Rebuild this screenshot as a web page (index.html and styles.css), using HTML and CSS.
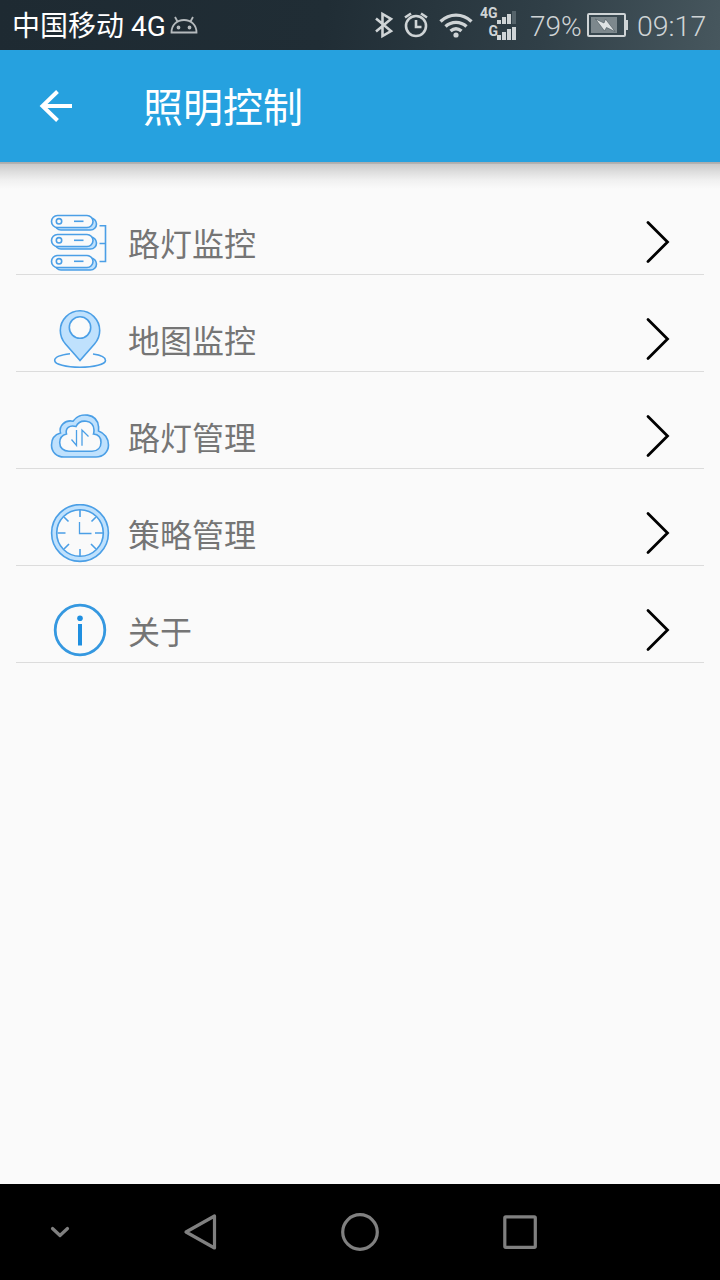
FILE: index.html
```
<!DOCTYPE html>
<html lang="zh-CN">
<head>
    <meta charset="UTF-8">
    <meta name="viewport" content="width=device-width, initial-scale=1.0">
    <title>照明控制</title>
    <link rel="stylesheet" href="styles.css">
</head>
<body>
    <div class="statusbar">
        <span class="carrier">中国移动 4G</span>
        <svg class="android" width="28" height="18" viewBox="0 0 28 18">
            <path d="M1.500 16.500C1.500 9 7 4 14 4s12.500 5 12.500 12.500zM7.500 5.500L5 1M20.500 5.500L23 1" />
            <circle cx="8.500" cy="11.500" r="1" />
            <circle cx="19.500" cy="11.500" r="1" />
        </svg>
        <svg class="signals" width="150" height="50" viewBox="0 0 150 50">
            <path class="line" d="M6 18.500L21 31l-8.500 5V14l8.500 5L6 31.500" />
            <circle class="line" cx="46" cy="26" r="10" />
            <path class="line" d="M46 20v7h5.500M35 17.500l6-4M57 17.500l-6-4" />
            <path class="wifi" d="M70.500 21.500c9-8.500 22-8.500 31 0M75.500 26.500c6-5.500 15-5.500 21 0M80.500 31c3.500-3 7.500-3 11 0" />
            <circle class="fill" cx="86" cy="35" r="2.600" />
            <text x="110" y="18">4G</text>
            <text x="118.500" y="35.500">G</text>
            <path class="fill" d="M127 20h4v4h-4zM132 17h4v7h-4zM137 14h4v10h-4zM127 35h4v5h-4zM132 32h4v8h-4zM137 29h4v11h-4zM142 27h4v13h-4z" />
            <path class="dim" d="M142 11h4v13h-4z" />
        </svg>
        <span class="percent">79%</span>
        <svg class="battery" width="42" height="26" viewBox="0 0 42 26">
            <rect class="shell" x="2" y="2" width="37" height="22" rx="1" />
            <rect class="fill" x="39.500" y="8" width="2.500" height="10" />
            <rect class="level" x="5" y="5" width="26" height="16" />
            <path class="bolt" d="M9.500 7L18 11l1.500-4L29 19.500 20.500 15.500 18.500 19z" />
        </svg>
        <span class="time">09:17</span>
    </div>

    <div class="toolbar">
        <svg class="back" width="34" height="34" viewBox="0 0 34 34">
            <path d="M33 17H4M18.500 2.500L3.500 17l15 14.500" />
        </svg>
        <h1>照明控制</h1>
    </div>

    <div class="menu">
        <div class="item">
            <svg class="icon" viewBox="0 0 60 60">
                <g id="server">
                    <rect class="soft" x="5" y="5" width="41.500" height="12" rx="6" />
                    <rect class="paper" x="1.500" y="2.500" width="41.500" height="12" rx="6" />
                    <circle cx="9" cy="8.300" r="2.700" />
                    <path d="M24 8.300h9.500" />
                </g>
                <use href="#server" y="19" />
                <use href="#server" y="40" />
                <path d="M49.500 12.800h6v35.700h-6M49.500 30.500h6" />
            </svg>
            <span class="label">路灯监控</span>
            <svg class="arrow" viewBox="0 0 24 60"><path d="M2 9.500l19.500 19.500L2 48.500" /></svg>
        </div>
        <div class="item">
            <svg class="icon" viewBox="0 0 60 60">
                <path d="M20 43.800C10 45 4.700 47.500 4.700 50.400c0 3.800 11.300 6.800 25.300 6.800s25.500-3 25.500-6.800c0-3-5-5.400-12.500-6.400" />
                <path class="soft" d="M30 50.500L15.500 34C12 30 10.300 25.500 10.300 20.500a19.700 19.700 0 0 1 39.400 0C49.700 25.500 48 30 44.500 34z" />
                <circle class="paper" cx="30" cy="17.500" r="10.700" />
            </svg>
            <span class="label">地图监控</span>
            <svg class="arrow" viewBox="0 0 24 60"><path d="M2 9.500l19.500 19.500L2 48.500" /></svg>
        </div>
        <div class="item">
            <svg class="icon" viewBox="0 0 60 60">
                <path class="soft" d="M14 50C6.500 50 1.500 45 1.500 38c0-6 3.500-10.500 9-12C8.500 19 15 12.500 23 14.200c6.500-9.500 24-8.500 25.500 5.300.3 1.500 0 3 0 4.500 6 2 10 7.500 10 14C58.500 45 53 50 46 50z" />
                <path class="paper" d="M19 44.200c-5.500 0-9.300-3.400-9.300-8.500 0-4.500 2.800-7.700 6.800-8.700-1.500-6 3-9.300 9.500-7.500 4-8 17.500-7 18 3.500 0 1.500 0 2.500-.5 4 5 .5 7.500 4 7.500 8.200 0 5.500-3.500 9-9 9z" />
                <path class="thin" d="M21.500 32.500l5 6V23M32 38.800V23l6.500 6.500" />
            </svg>
            <span class="label">路灯管理</span>
            <svg class="arrow" viewBox="0 0 24 60"><path d="M2 9.500l19.500 19.500L2 48.500" /></svg>
        </div>
        <div class="item">
            <svg class="icon" viewBox="0 0 60 60">
                <circle class="soft" cx="30" cy="29" r="28.400" />
                <circle class="paper" cx="30" cy="29" r="23.300" />
                <path d="M30 6v7M30 45v7M7.500 29h8M45 29h8M14 13l4.500 4.500M46 13l-4.500 4.500M14 45l5-5M46 45l-5-5" />
                <path class="thin" d="M29.500 18v11.500H41.500" />
            </svg>
            <span class="label">策略管理</span>
            <svg class="arrow" viewBox="0 0 24 60"><path d="M2 9.500l19.500 19.500L2 48.500" /></svg>
        </div>
        <div class="item">
            <svg class="icon about" viewBox="0 0 60 60">
                <circle cx="30" cy="29" r="24.800" />
                <circle class="dot" cx="30" cy="17.300" r="2.800" />
                <path class="stem" d="M30 23v21.500" />
            </svg>
            <span class="label">关于</span>
            <svg class="arrow" viewBox="0 0 24 60"><path d="M2 9.500l19.500 19.500L2 48.500" /></svg>
        </div>
    </div>

    <div class="navbar">
        <svg class="hide" width="20" height="12" viewBox="0 0 20 12"><path d="M2.500 2.500L10 9.500l7.500-7" /></svg>
        <svg width="40" height="40" viewBox="0 0 40 40"><path d="M34.500 4v32L6 20z" /></svg>
        <svg width="40" height="40" viewBox="0 0 40 40"><circle cx="20" cy="20" r="17.300" /></svg>
        <svg width="40" height="40" viewBox="0 0 40 40"><rect x="4.800" y="4.800" width="30.500" height="30.500" rx="1" /></svg>
    </div>
</body>
</html>
```
FILE: styles.css
```
* {
    box-sizing: border-box;
}

body {
    margin: 0;
    height: 1280px;
    display: flex;
    flex-direction: column;
    background: #fafafa;
    font-family: Roboto, "Noto Sans CJK SC", sans-serif;
    overflow: hidden;
}

svg {
    display: block;
    flex: none;
    fill: none;
}

.statusbar {
    height: 50px;
    flex: none;
    display: flex;
    align-items: center;
    padding: 0 12px;
    background: linear-gradient(100deg, #1e2a32 0%, #202d35 45%, #303f47 75%, #47575e 100%);
    color: #cfd4d6;
    font-size: 28px;
    line-height: 50px;
    white-space: nowrap;
}

.statusbar span {
    padding-top: 4px;
}

.carrier {
    width: 158px;
    color: #fff;
}

.android {
    stroke: #b5babd;
    stroke-width: 1.8;
}

.signals {
    margin-left: 172px;
}

.signals .line {
    stroke: #cfd4d6;
    stroke-width: 2.6;
}

.signals .wifi {
    stroke: #cfd4d6;
    stroke-width: 3.4;
}

.signals text {
    fill: #cfd4d6;
    font-size: 14px;
    font-weight: bold;
}

.fill {
    fill: #cfd4d6;
}

.dim {
    fill: #55636a;
}

.percent {
    width: 56px;
    margin-left: 10px;
    font-weight: 300;
}

.shell {
    stroke: #cfd4d6;
    stroke-width: 2;
}

.level {
    fill: #7d888d;
}

.bolt {
    fill: #dfe3e4;
    stroke: #46545b;
    stroke-width: 0.6;
}

.time {
    margin-left: 9px;
    font-size: 28.5px;
    font-weight: 300;
}

.toolbar {
    height: 112px;
    flex: none;
    display: flex;
    align-items: center;
    padding-left: 39px;
    background: #26a1df;
    color: #fff;
}

.back {
    stroke: #fff;
    stroke-width: 4;
}

.toolbar h1 {
    margin: 0 0 0 70px;
    padding-top: 6px;
    font-size: 40px;
    font-weight: 400;
    line-height: 60px;
}

.menu {
    flex: 1;
    padding: 16px 16px 0;
    background: linear-gradient(#aaa 0, #b4b4b4 2px, #c9c9c9 2px, #dedede 10px, #f0f0f0 18px, #fafafa 27px);
}

.item {
    height: 97px;
    display: flex;
    padding: 35px 34px 0;
    border-bottom: 1px solid #dcdcdc;
}

.icon {
    width: 60px;
    height: 60px;
    stroke: #4b9fe6;
    stroke-width: 1.6;
}

.soft {
    fill: #bfe1fd;
}

.paper {
    fill: #fafafa;
}

.thin {
    stroke-width: 1.3;
}

.about {
    stroke: #3598e0;
    stroke-width: 2.8;
}

.about .dot {
    fill: #1f8fe0;
    stroke: none;
}

.about .stem {
    stroke: #1f8fe0;
    stroke-width: 4;
}

.label {
    flex: 1;
    margin-left: 18px;
    color: #757575;
    font-size: 32px;
    line-height: 64px;
}

.arrow {
    width: 24px;
    height: 60px;
    stroke: #000;
    stroke-width: 2.8;
    stroke-linecap: round;
}

.navbar {
    height: 96px;
    flex: none;
    display: flex;
    align-items: center;
    gap: 120px;
    padding-left: 50px;
    background: #000;
}

.navbar svg {
    stroke: #808080;
    stroke-width: 3.2;
    stroke-linejoin: round;
    stroke-linecap: round;
}

.navbar .hide {
    margin-right: -10px;
}
```
